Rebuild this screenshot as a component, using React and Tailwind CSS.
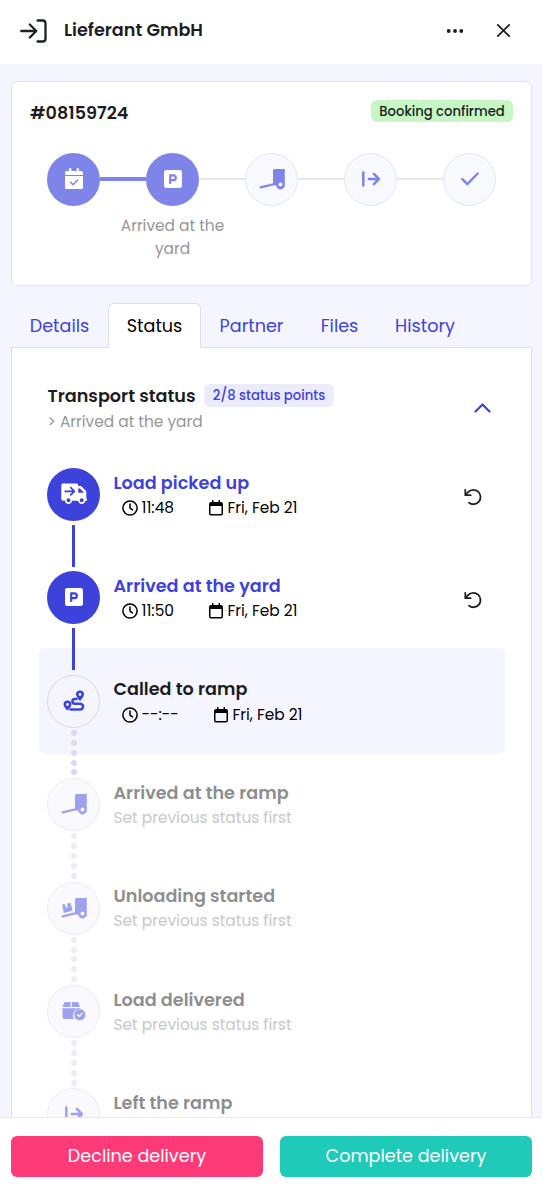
import clsx from 'clsx';

/* Iconos */
const CalendarCheck = () => (
  <svg width="18" height="22" viewBox="0 0 18 22">
    <path fill="currentColor" d="M0 4.600Q0 3 1.600 3H4V1.200a1.200 1.200 0 0 1 2.400 0V3h5.200V1.200a1.200 1.200 0 0 1 2.400 0V3h2.400Q18 3 18 4.600V7H0zM0 8h18v11.400q0 1.600-1.600 1.600H1.600Q0 21 0 19.400z" />
    <path d="M5.600 14.200l2.500 2.500 4.500-4.600" fill="none" stroke="#7f84e9" strokeWidth="1.500" strokeLinecap="round" strokeLinejoin="round" />
  </svg>
);

const Parking = ({ hole }) => (
  <svg width="18" height="18" viewBox="0 0 18 18">
    <rect width="18" height="18" rx="2.300" fill="currentColor" />
    <path d="M6.200 13V5.400H9.400a2.400 2.400 0 0 1 0 4.800H6.200" fill="none" stroke={hole} strokeWidth="2.200" strokeLinecap="round" strokeLinejoin="round" />
  </svg>
);

const Ramp = ({ boxes }) => (
  <svg width="26" height="22" viewBox="0 0 26 22">
    <path d="M1.700 19.400L14.500 16.200" stroke="currentColor" strokeWidth="2.200" strokeLinecap="round" />
    <path fill="currentColor" fillRule="evenodd" d="M15.500 1H25.800V16.600a4.300 4.300 0 0 1-8.600 1L14 17.300V2.500Q14 1 15.500 1zM21.500 14.500a2 2 0 1 0 0 4 2 2 0 0 0 0-4z" />
    {boxes && <path fill="currentColor" d="M1.200 8.400q-.1-.6.500-.8l1.900-.5 1.200 3.600 1.900-.5-.5-3.600 2.600-.7q.7-.2.900.5l1.900 7.200-7.900 2.200q-.7.200-.9-.5z" />}
  </svg>
);

const Depart = () => (
  <svg width="18" height="16" viewBox="0 0 18 16" fill="none" stroke="currentColor" strokeLinecap="round" strokeLinejoin="round">
    <path d="M1.300 1.400v13.200" strokeWidth="2.500" />
    <path d="M6.800 8h9.500M11.900 2.900L16.900 8l-5 5.100" strokeWidth="2.500" />
  </svg>
);

const Check = () => (
  <svg width="18" height="14" viewBox="0 0 18 14" fill="none" stroke="currentColor" strokeWidth="2.400" strokeLinecap="round" strokeLinejoin="round">
    <path d="M1.300 7.200l5 5L16.700 1.500" />
  </svg>
);

const Truck = () => (
  <svg width="26" height="22" viewBox="0 0 26 22">
    <path fill="currentColor" fillRule="evenodd" d="M2 .5h13.500q1.700 0 1.700 1.700V3h2q1 0 1.700.7l3.700 3.700q.7.700.7 1.700v6.300q1 .1 1 1.200 0 1.200-1.200 1.200h-.7a3.700 3.700 0 0 1-7.300 0h-6a3.700 3.700 0 0 1-7.300 0H2Q.3 17.800.3 16.100V2.200Q.3.500 2 .5zM17.200 5.600v4.200h5.600v-.4L19 5.600zM7.500 15.200a2 2 0 1 0 0 4 2 2 0 0 0 0-4zM20.700 15.200a2 2 0 1 0 0 4 2 2 0 0 0 0-4z" />
    <path d="M4.300 8.300h9M9.700 4.700l3.700 3.600-3.700 3.600" fill="none" stroke="#3d42db" strokeWidth="1.700" strokeLinecap="round" strokeLinejoin="round" />
  </svg>
);

const Route = () => (
  <svg width="22" height="22" viewBox="0 0 22 22">
    <path fill="currentColor" fillRule="evenodd" d="M17 .5a4 4 0 0 1 4 4c0 1.800-2.400 4.800-4 6.500-1.600-1.700-4-4.700-4-6.500a4 4 0 0 1 4-4zm0 2.600a1.400 1.400 0 1 0 0 2.800 1.400 1.400 0 0 0 0-2.800zM4.500 10.500a4 4 0 0 1 4 4c0 1.800-2.400 4.500-4 6.200C2.900 19 .5 16.300.5 14.500a4 4 0 0 1 4-4zm0 2.600a1.400 1.400 0 1 0 0 2.800 1.400 1.400 0 0 0 0-2.800z" />
    <path d="M13.500 9h-1.700a2.200 2.200 0 0 0 0 4.700h5.400a2.900 2.900 0 0 1 0 5.800H7.500" fill="none" stroke="currentColor" strokeWidth="2.500" strokeLinecap="round" />
  </svg>
);

const PackageCheck = () => (
  <svg width="24" height="20" viewBox="0 0 24 20">
    <path fill="currentColor" d="M3.300 1H8.500V6H.5L2 1.900Q2.300 1 3.300 1zM9.800 1h5.400q1 0 1.300.9L18 6H9.800zM.5 7.200H18v.8a6.500 6.500 0 0 0-6 10H2.300Q.5 18 .5 16.200z" />
    <circle cx="17.800" cy="13.700" r="5.600" fill="currentColor" />
    <path d="M15.500 13.800l1.700 1.700 3-3.200" fill="none" stroke="#f9f9fe" strokeWidth="1.300" strokeLinecap="round" strokeLinejoin="round" />
  </svg>
);

const Clock = () => (
  <svg width="16" height="16" viewBox="0 0 16 16" fill="none" stroke="currentColor" strokeWidth="1.500" strokeLinecap="round" strokeLinejoin="round">
    <circle cx="8" cy="8" r="7.100" />
    <path d="M8 4v4.200l2.500 1.700" />
  </svg>
);

const Calendar = () => (
  <svg width="14" height="16" viewBox="0 0 14 16">
    <path fill="currentColor" fillRule="evenodd" d="M3 .7a.75.75 0 0 1 1.500 0V2h5V.7a.75.75 0 0 1 1.500 0V2h1q2 0 2 2v9.500q0 2-2 2H2q-2 0-2-2V4q0-2 2-2h1zM1.500 6v7.500q0 .5.500.5h10q.5 0 .5-.5V6z" />
  </svg>
);

const Undo = () => (
  <svg width="18" height="18" viewBox="0 0 18 18" fill="none" stroke="#212121" strokeWidth="1.800" strokeLinecap="round" strokeLinejoin="round">
    <path d="M1.300 1.800v5.400h5.400M1.600 6.900L4.200 4A7.200 7.200 0 1 1 5 14.800" />
  </svg>
);

const stepper = [
  { icon: <CalendarCheck />, done: true },
  { icon: <Parking hole="#7f84e9" />, done: true },
  { icon: <Ramp /> },
  { icon: <Depart /> },
  { icon: <Check /> },
];

const tabs = [
  { name: 'Details', width: 'w-[97px]' },
  { name: 'Status', width: 'w-[93px]', active: true },
  { name: 'Partner', width: 'w-[101px]' },
  { name: 'Files', width: 'w-[75px]' },
  { name: 'History', width: 'w-[96px]' },
];

const points = [
  { title: 'Load picked up', icon: <Truck />, state: 'done', time: '11:48', date: 'Fri, Feb 21' },
  { title: 'Arrived at the yard', icon: <Parking hole="#3d42db" />, state: 'done', time: '11:50', date: 'Fri, Feb 21' },
  { title: 'Called to ramp', icon: <Route />, state: 'next', time: '--:--', date: 'Fri, Feb 21' },
  { title: 'Arrived at the ramp', icon: <Ramp />, state: 'locked', hint: 'Set previous status first' },
  { title: 'Unloading started', icon: <Ramp boxes />, state: 'locked', hint: 'Set previous status first' },
  { title: 'Load delivered', icon: <PackageCheck />, state: 'locked', hint: 'Set previous status first' },
  { title: 'Left the ramp', icon: <Depart />, state: 'locked' },
];

function Connector({ state }) {
  if (state === 'done') {
    return <div className="relative z-10 mt-1 h-[42px] w-[3px] shrink-0 bg-[#3d42db]" />;
  }
  return (
    <div className="relative z-10 mt-[2px] ml-px flex shrink-0 flex-col gap-[3.900px]">
      {[0, 1, 2, 3, 4].map(i => (
        <span key={i} className={clsx('size-[6px] rounded-full', state === 'next' ? 'bg-[#d9d9f8]' : 'bg-[#ebebfc]')} />
      ))}
    </div>
  );
}

function StatusPoint({ point, last }) {
  const { title, icon, state, time, date, hint } = point;
  return (
    <li
      className={clsx(
        'flex shrink-0 rounded-md pl-2',
        state === 'next' ? '-mt-[2px] h-[106px] bg-[#f4f5fe] pt-[2px] mb-[-0.600px]' : 'h-[103.400px]'
      )}
    >
      <div className="flex w-[53px] flex-col items-center pt-[25px]">
        <div
          className={clsx(
            'flex size-[53px] shrink-0 items-center justify-center rounded-full',
            state === 'done' && 'bg-[#3d42db] text-white',
            state === 'next' && 'border border-[#d9d9dc] text-[#3d42db]',
            state === 'locked' && 'border border-[#ececf0] bg-[#f9f9fe] text-[#9ea1ee]'
          )}
        >
          <span className="-mt-px">{icon}</span>
        </div>
        {!last && <Connector state={state} />}
      </div>

      <div className="ml-[13.500px] flex-1 pt-[26.600px]">
        <h3
          className={clsx(
            'text-[17.600px] leading-[26px] font-semibold',
            state === 'done' && 'text-[#3d42db]',
            state === 'next' && 'text-[#1d1d1f]',
            state === 'locked' && 'text-[#8e8e8f]'
          )}
        >
          {title}
        </h3>
        {hint && <p className="text-[15.400px] leading-6 text-[#c8c8c9]">{hint}</p>}
        {time && (
          <div className="mt-[0.400px] flex items-center pl-2 text-[15.400px] leading-6 text-black">
            <Clock />
            <span className={clsx('ml-1', state === 'next' ? 'w-[72px]' : 'w-[67px]')}>{time}</span>
            <Calendar />
            <span className="ml-[5px]">{date}</span>
          </div>
        )}
      </div>

      {state === 'done' && (
        <button className="mr-[23px] flex h-[108px] items-center">
          <Undo />
        </button>
      )}
    </li>
  );
}

export default function App() {
  return (
    <div className="flex h-screen w-full flex-col overflow-hidden bg-[#f4f5fe] font-[Poppins,Inter,sans-serif] text-[#1d1d1f]">
      {/* Header */}
      <header className="flex h-16 shrink-0 items-center bg-white pr-[31px] pb-[3px] pl-5">
        <svg width="27" height="24" viewBox="0 0 27 24" fill="none" stroke="#1d2226" strokeWidth="2.300" strokeLinecap="round" strokeLinejoin="round">
          <path d="M1.200 12h15M9.800 5.500l6.500 6.500-6.500 6.500M17.500 1.500h5.200q2.800 0 2.800 2.800v15.400q0 2.800-2.800 2.800h-5.200" />
        </svg>
        <h1 className="ml-[17px] flex-1 text-[17.600px] font-semibold">Lieferant GmbH</h1>
        <button>
          <svg width="18" height="6" viewBox="0 0 18 6" fill="#1d1d1f">
            <circle cx="2.700" cy="3" r="1.900" /><circle cx="9" cy="3" r="1.900" /><circle cx="15.300" cy="3" r="1.900" />
          </svg>
        </button>
        <button className="ml-8">
          <svg width="15" height="15" viewBox="0 0 15 15" stroke="#1d1d1f" strokeWidth="1.700" strokeLinecap="round">
            <path d="M1.800 1.800l11.400 11.400M13.200 1.800L1.800 13.200" />
          </svg>
        </button>
      </header>

      <main className="flex min-h-0 flex-1 flex-col overflow-hidden px-[11px] pt-[17px]">
        {/* Booking */}
        <section className="h-[205px] w-[521px] shrink-0 rounded-md border border-[#e2e2f0] bg-white px-[18px] pt-[17px]">
          <div className="flex items-center justify-between">
            <h2 className="text-[17.600px] leading-7 font-semibold">#08159724</h2>
            <span className="mb-1 flex h-[22px] w-[142px] items-center justify-center rounded-md bg-[#c6f6c3] pt-px text-[13.200px] font-medium">
              Booking confirmed
            </span>
          </div>
          <div className="mt-[26px] flex items-center pl-[17px]">
            {stepper.map((s, i) => (
              <div key={i} className="flex items-center">
                {i > 0 && <div className={clsx('-mt-px w-[46px]', s.done ? 'h-1 bg-[#7f84e9]' : 'h-[2px] bg-[#e6e6e8]')} />}
                <div
                  className={clsx(
                    'flex size-[53px] items-center justify-center rounded-full',
                    s.done ? 'bg-[#7f84e9] text-white' : 'border border-[#e6e6ea] bg-[#f8f9fe] text-[#7f84e9]'
                  )}
                >
                  <span className="-mt-[2px]">{s.icon}</span>
                </div>
              </div>
            ))}
          </div>
          <p className="mt-2 ml-[88px] w-[109px] text-center text-[15.400px] leading-[23px] text-[#969697]">Arrived at the yard</p>
        </section>

        {/* Tabs */}
        <nav className="relative z-10 mt-[17px] -mb-px flex h-[45px] shrink-0">
          {tabs.map(t => (
            <button
              key={t.name}
              className={clsx(
                'shrink-0 rounded-t-md pt-px text-[17.600px]',
                t.width,
                t.active ? 'border border-b-0 border-[#dcdfe8] bg-white text-black' : 'text-[#3d42db]'
              )}
            >
              {t.name}
            </button>
          ))}
        </nav>

        {/* Status */}
        <section className="min-h-0 w-[521px] flex-1 overflow-hidden border border-b-0 border-[#dcdfe8] bg-white">
          <div className="flex items-center pt-[35px] pr-[40.500px] pl-[35.500px]">
            <div className="flex-1">
              <div className="flex items-center">
                <h2 className="w-[156.500px] text-[17.600px] leading-[26px] font-semibold whitespace-nowrap">Transport status</h2>
                <span className="mb-px flex h-[23px] w-[130px] items-center justify-center rounded-md bg-[#ebebfc] text-[13.200px] font-medium text-[#3d42db]">
                  2/8 status points
                </span>
              </div>
              <p className="text-[15.400px] leading-[25px] text-[#969697]">&gt; Arrived at the yard</p>
            </div>
            <button className="-mt-[2px]">
              <svg width="17" height="10" viewBox="0 0 17 10" fill="none" stroke="#3d42db" strokeWidth="2.200" strokeLinecap="round" strokeLinejoin="round">
                <path d="M1.500 8.500l7-7 7 7" />
              </svg>
            </button>
          </div>

          <ul className="mt-[9.100px] mr-[26px] ml-[27px] flex flex-col">
            {points.map((p, i) => (
              <StatusPoint key={p.title} point={p} last={i === points.length - 1} />
            ))}
          </ul>
        </section>
      </main>

      {/* Footer */}
      <footer className="flex h-[71px] shrink-0 gap-[17px] border-t border-[#e8e8f0] bg-white pt-[18px] pr-[10px] pl-[11px]">
        <button className="h-[41px] w-[252px] rounded-md bg-[#ff3a78] text-[17.600px] text-white">Decline delivery</button>
        <button className="h-[41px] w-[252px] rounded-md bg-[#1fcab9] text-[17.600px] text-white">Complete delivery</button>
      </footer>
    </div>
  );
}
